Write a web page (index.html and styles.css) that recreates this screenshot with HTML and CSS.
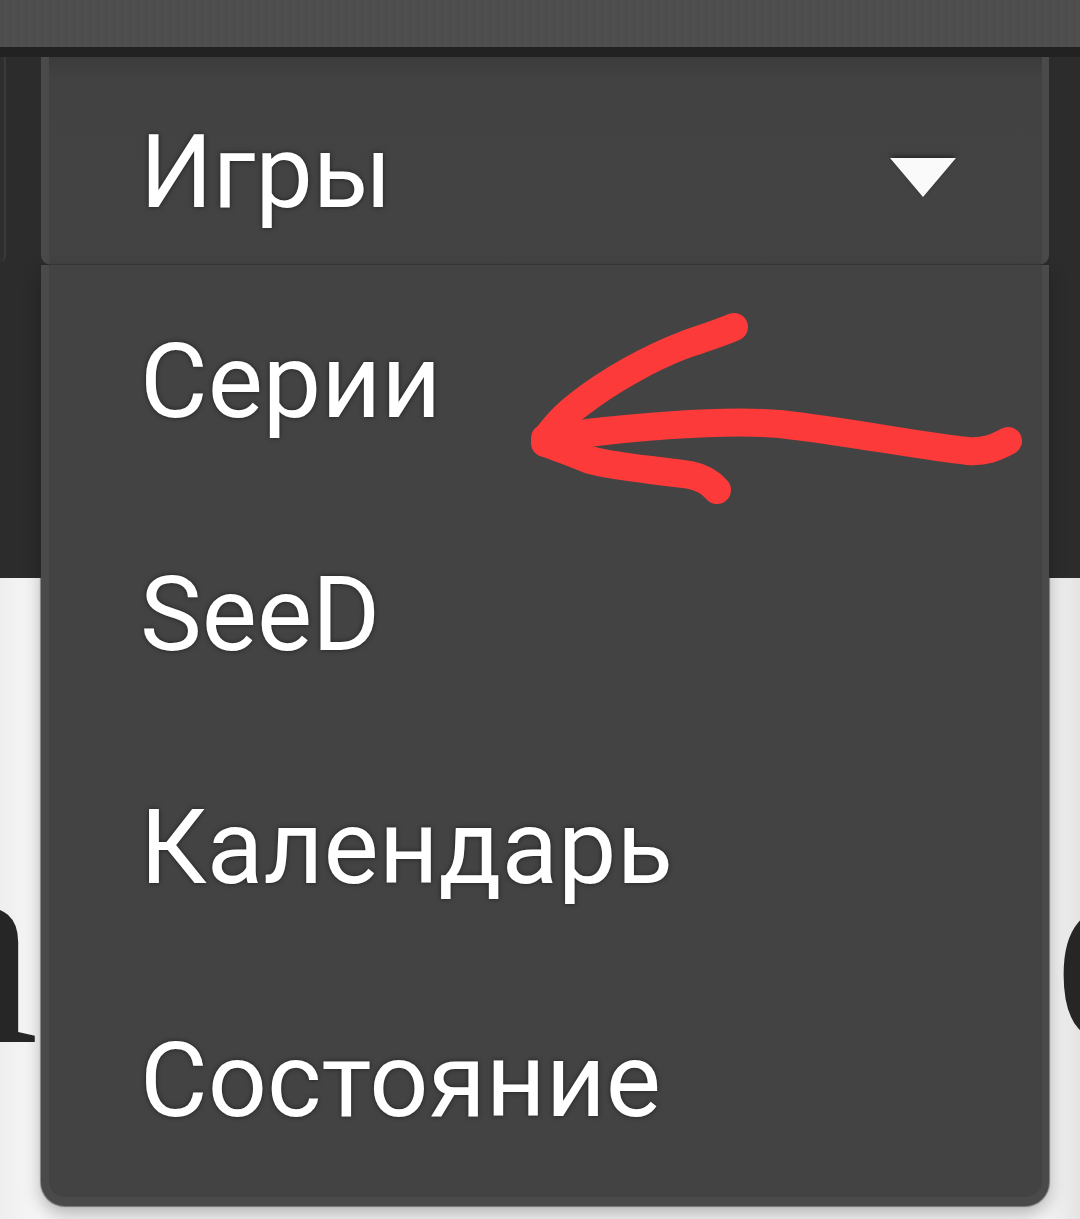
FILE: index.html
```html
<!DOCTYPE html>
<html lang="ru">
<head>
<meta charset="utf-8">
<title>Меню</title>
<link rel="stylesheet" href="styles.css">
</head>
<body>
<div class="page">
  <header class="topbar"></header>
  <div class="divider"></div>
  <nav class="nav">
    <div class="prev-tab"></div>
    <div class="select">
      <span class="select-label">Игры</span>
      <span class="caret"></span>
    </div>
  </nav>
  <main class="content">
    <h1 class="title"><span class="glyph-left">а</span><span class="glyph-right">е</span></h1>
  </main>

  <ul class="menu">
    <li class="menu-item">Серии</li>
    <li class="menu-item">SeeD</li>
    <li class="menu-item">Календарь</li>
    <li class="menu-item">Состояние</li>
  </ul>

  <svg class="annotation" width="520" height="220" viewBox="520 300 520 220">
    <g fill="none" stroke="#fd3a3a" stroke-width="28" stroke-linecap="round" stroke-linejoin="round">
      <path d="M1008 441 C 995 448, 985 452, 968 451 C 920 446, 850 432, 780 424 C 720 419, 640 427, 587 433 C 565 436, 552 437, 545 438"/>
      <path d="M734 327 C 715 335, 700 339, 684 345 C 650 358, 610 380, 578 405 C 565 415, 557 424, 550 433"/>
      <path d="M545 443 C 560 448, 575 454, 590 460 C 620 468, 650 469, 690 475 C 705 478, 712 484, 717 490"/>
    </g>
  </svg>
</div>
</body>
</html>
```

FILE: styles.css
```css
html, body {
  margin: 0;
  padding: 0;
}

body {
  width: 1080px;
  height: 1219px;
  overflow: hidden;
  background: #f1f1f1;
  font-family: Roboto, "Noto Sans", Arial, sans-serif;
}

.page {
  position: relative;
  width: 1080px;
  height: 1219px;
  overflow: hidden;
}

.topbar {
  height: 47px;
  background: repeating-linear-gradient(90deg, #4f4f4f 0px, #4c4c4c 3px, #515151 5px, #4e4e4e 8px);
}

.divider {
  height: 10px;
  background: #222222;
}

.nav {
  height: 521px;
  background: #2c2c2c;
  display: flex;
  align-items: flex-start;
}

.prev-tab {
  width: 4px;
  height: 205px;
  background: #2e2e2e;
  border-right: 2px solid #3a3a3a;
  border-bottom-right-radius: 6px;
}

.select {
  box-sizing: border-box;
  margin-left: 35px;
  width: 1008px;
  height: 208px;
  background: linear-gradient(180deg, #3b3b3b 0px, #424242 22px, #434343 100%);
  border-left: 8px solid #4a4a4a;
  border-right: 7px solid #4a4a4a;
  border-bottom-left-radius: 10px;
  border-bottom-right-radius: 10px;
  display: flex;
  align-items: center;
  justify-content: space-between;
  padding: 22px 86px 0 91px;
}

.select-label {
  color: #ffffff;
  font-size: 102px;
  line-height: 1;
  text-shadow: 0 0 5px rgba(0, 0, 0, 0.55);
}

.caret {
  width: 0;
  height: 0;
  border-left: 33px solid transparent;
  border-right: 33px solid transparent;
  border-top: 39px solid #fafafa;
  margin-top: 10px;
  filter: drop-shadow(0 -2px 2px rgba(0, 0, 0, 0.45));
}

.content {
  height: 641px;
  background: linear-gradient(90deg, #eeeeee 0px, #f7f7f7 40px, #f7f7f7 1040px, #e4e4e4 1080px);
  overflow: hidden;
}

.title {
  margin: 0;
  padding-top: 222px;
  display: flex;
  justify-content: space-between;
  font-family: "Liberation Serif", "DejaVu Serif", serif;
  font-weight: 400;
  font-size: 290px;
  line-height: 1;
  color: #262626;
}

.glyph-left {
  margin-left: -90px;
}

.glyph-right {
  margin-right: -101px;
}

.menu {
  position: absolute;
  top: 265px;
  left: 41px;
  width: 1008px;
  box-sizing: border-box;
  margin: 0;
  padding: 0;
  list-style: none;
  background: #434343;
  border-left: 8px solid #4a4a4a;
  border-right: 7px solid #4a4a4a;
  border-bottom: 9px solid #4a4a4a;
  border-bottom-left-radius: 24px;
  border-bottom-right-radius: 24px;
  box-shadow: 0 0 1px 1px rgba(40, 40, 40, 0.5), 0 8px 18px rgba(0, 0, 0, 0.28);
}

.menu-item {
  height: 233px;
  display: flex;
  align-items: center;
  padding-left: 91px;
  color: #ffffff;
  font-size: 104px;
  line-height: 1;
  text-shadow: 0 0 5px rgba(0, 0, 0, 0.55);
}

.annotation {
  position: absolute;
  left: 520px;
  top: 300px;
}
```
